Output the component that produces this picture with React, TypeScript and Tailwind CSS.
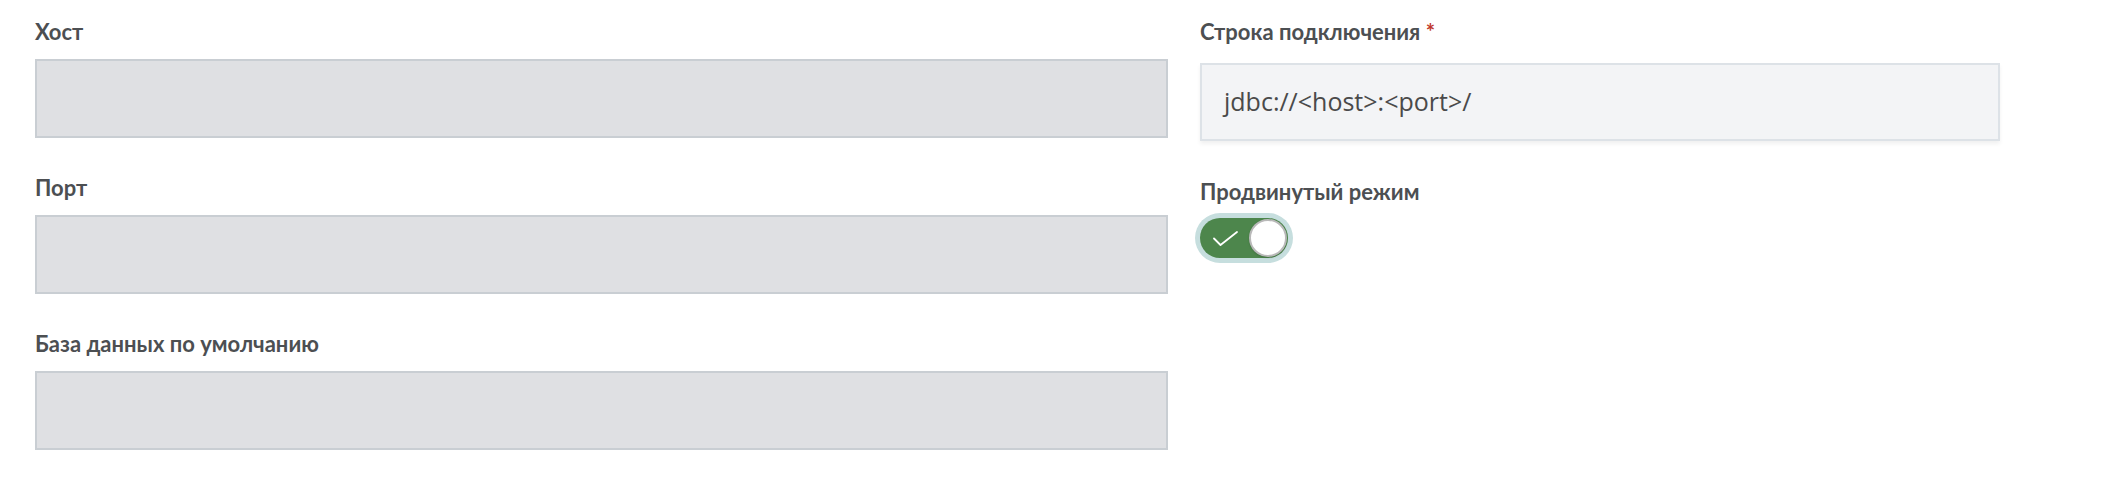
import React from 'react';

const labelCls =
  "block text-[22px] leading-[24px] font-bold text-[#4c4f52] font-['Lato','Noto_Sans',sans-serif]";

function Field({ label, className = '' }: { label: string; className?: string }) {
  return (
    <div className={className}>
      <label className={labelCls}>{label}</label>
      <div className="mt-[15px] h-[79px] border-2 border-[#c9ced3] bg-[#dfe0e3]" />
    </div>
  );
}

function Toggle() {
  return (
    <div className="flex h-[40px] w-[88px] items-center justify-between rounded-full bg-[#4d864c] pl-[13px] pr-[1px] ring-[5px] ring-[#c6dede]">
      <svg width="25" height="15" viewBox="0 0 25 15" fill="none">
        <path d="M1 7.5 L7.5 14 L24 1" stroke="#ffffff" strokeWidth="1.8" strokeLinecap="round" strokeLinejoin="round" />
      </svg>
      <div className="h-[38px] w-[38px] rounded-full border-2 border-[#b9b9b9] bg-white shadow-[0_1px_2px_rgba(0,0,0,0.15)]" />
    </div>
  );
}

export default function App() {
  return (
    <div className="flex min-h-[478px] w-full gap-[32px] bg-white pl-[35px] pt-[20px]">
      {/* Left column: host / port / default db */}
      <div className="flex w-[1133px] flex-col gap-[38px]">
        <Field label="Хост" />
        <Field label="Порт" />
        <Field label="База данных по умолчанию" />
      </div>

      {/* Right column: connection string + advanced toggle */}
      <div className="flex w-[800px] flex-col">
        <label className={labelCls}>
          Строка подключения <span className="text-[#c0392b]">*</span>
        </label>
        <div className="mt-[19px] flex h-[78px] items-center border-2 border-[#dde2e7] bg-[#f3f4f6] px-[22px] shadow-[0_3px_4px_rgba(0,0,0,0.06)]">
          <span className="text-[25px] text-[#4a4a4a] font-['Open_Sans',sans-serif]">
            jdbc://&lt;host&gt;:&lt;port&gt;/
          </span>
        </div>
        <label className={`${labelCls} mt-[39px]`}>Продвинутый режим</label>
        <div className="mt-[14px]">
          <Toggle />
        </div>
      </div>
    </div>
  );
}
